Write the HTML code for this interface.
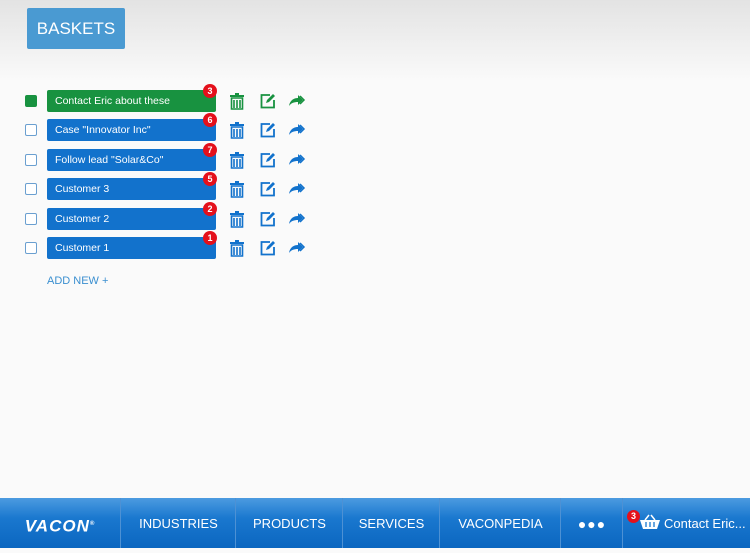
<!DOCTYPE html><html><head><style>
body{margin:0;width:750px;height:548px;overflow:hidden;font-family:"Liberation Sans",sans-serif;background:#fafafa;position:relative}
.top{position:absolute;left:0;top:0;width:750px;height:80px;background:linear-gradient(#e3e3e3,#fafafa)}
.bk{position:absolute;left:27px;top:8px;width:98px;height:41px;background:#4a9ad2;border-radius:2px;color:#fff;font-size:17px;line-height:41px;text-align:center}
.row{position:absolute;left:0;height:22px;width:320px}
.cb{position:absolute;left:25px;top:5px;width:10px;height:10px;border:1px solid #6a9fd0;border-radius:2px;background:#fff}
.bar{position:absolute;left:47px;top:0;width:169px;height:22px;background:#1272cc;border-radius:2px;color:#fff;font-size:10.5px;line-height:22px;padding-left:8px;box-sizing:border-box}
.g .bar{background:#189240}.g .cb{background:#189240;border-color:#189240}
.bd{position:absolute;left:203px;top:-6px;width:14px;height:14px;border-radius:50%;background:#e4101b;color:#fff;font-size:9px;font-weight:bold;text-align:center;line-height:14px}
.ic{position:absolute;top:3px}
.add{position:absolute;left:47px;top:275px;color:#3a8fd0;font-size:11px}
.ft{position:absolute;left:0;top:498px;width:750px;height:50px;background:linear-gradient(#4c9be0,#1a78cf 40%,#0b66c0);color:#fff;font-size:13px}
.ft div{position:absolute;top:0;height:50px;line-height:52px;border-left:1px solid #4d91d4;text-align:center}
</style></head><body>
<div class="top"></div><div class="bk">BASKETS</div>

<div class="row g" style="top:90px"><div class="cb"></div><div class="bar">Contact Eric about these</div><div class="bd">3</div>
<svg class="ic" style="left:229px" width="16" height="17"><rect x="1" y="2" width="14" height="2" fill="#189240"/><rect x="6" y="0" width="4" height="2" fill="#189240"/><path d="M2.5 5h11v11h-11z M5 7v8M8 7v8M11 7v8" stroke="#189240" stroke-width="1.6" fill="none"/></svg>
<svg class="ic" style="left:260px" width="16" height="16"><path d="M10 2H1.5v12.5H14V7" stroke="#189240" stroke-width="1.8" fill="none"/><path d="M6 10l1-3 6-6 2 2-6 6z" fill="#189240"/></svg>
<svg class="ic" style="left:288px;top:5px" width="18" height="12"><path d="M1 11C2 5 6 3 10 3V0l5 5-5 5V7C6 7 3 8 1 11z" fill="#189240"/><path d="M12 1l4 4-4 4" stroke="#189240" stroke-width="1.5" fill="none"/></svg></div>

<div class="row" style="top:119px"><div class="cb"></div><div class="bar">Case "Innovator Inc"</div><div class="bd">6</div>
<svg class="ic" style="left:229px" width="16" height="17"><rect x="1" y="2" width="14" height="2" fill="#1272cc"/><rect x="6" y="0" width="4" height="2" fill="#1272cc"/><path d="M2.5 5h11v11h-11z M5 7v8M8 7v8M11 7v8" stroke="#1272cc" stroke-width="1.6" fill="none"/></svg>
<svg class="ic" style="left:260px" width="16" height="16"><path d="M10 2H1.5v12.5H14V7" stroke="#1272cc" stroke-width="1.8" fill="none"/><path d="M6 10l1-3 6-6 2 2-6 6z" fill="#1272cc"/></svg>
<svg class="ic" style="left:288px;top:5px" width="18" height="12"><path d="M1 11C2 5 6 3 10 3V0l5 5-5 5V7C6 7 3 8 1 11z" fill="#1272cc"/><path d="M12 1l4 4-4 4" stroke="#1272cc" stroke-width="1.5" fill="none"/></svg></div>

<div class="row" style="top:149px"><div class="cb"></div><div class="bar">Follow lead "Solar&amp;Co"</div><div class="bd">7</div>
<svg class="ic" style="left:229px" width="16" height="17"><rect x="1" y="2" width="14" height="2" fill="#1272cc"/><rect x="6" y="0" width="4" height="2" fill="#1272cc"/><path d="M2.5 5h11v11h-11z M5 7v8M8 7v8M11 7v8" stroke="#1272cc" stroke-width="1.6" fill="none"/></svg>
<svg class="ic" style="left:260px" width="16" height="16"><path d="M10 2H1.5v12.5H14V7" stroke="#1272cc" stroke-width="1.8" fill="none"/><path d="M6 10l1-3 6-6 2 2-6 6z" fill="#1272cc"/></svg>
<svg class="ic" style="left:288px;top:5px" width="18" height="12"><path d="M1 11C2 5 6 3 10 3V0l5 5-5 5V7C6 7 3 8 1 11z" fill="#1272cc"/><path d="M12 1l4 4-4 4" stroke="#1272cc" stroke-width="1.5" fill="none"/></svg></div>

<div class="row" style="top:178px"><div class="cb"></div><div class="bar">Customer 3</div><div class="bd">5</div>
<svg class="ic" style="left:229px" width="16" height="17"><rect x="1" y="2" width="14" height="2" fill="#1272cc"/><rect x="6" y="0" width="4" height="2" fill="#1272cc"/><path d="M2.5 5h11v11h-11z M5 7v8M8 7v8M11 7v8" stroke="#1272cc" stroke-width="1.6" fill="none"/></svg>
<svg class="ic" style="left:260px" width="16" height="16"><path d="M10 2H1.5v12.5H14V7" stroke="#1272cc" stroke-width="1.8" fill="none"/><path d="M6 10l1-3 6-6 2 2-6 6z" fill="#1272cc"/></svg>
<svg class="ic" style="left:288px;top:5px" width="18" height="12"><path d="M1 11C2 5 6 3 10 3V0l5 5-5 5V7C6 7 3 8 1 11z" fill="#1272cc"/><path d="M12 1l4 4-4 4" stroke="#1272cc" stroke-width="1.5" fill="none"/></svg></div>

<div class="row" style="top:208px"><div class="cb"></div><div class="bar">Customer 2</div><div class="bd">2</div>
<svg class="ic" style="left:229px" width="16" height="17"><rect x="1" y="2" width="14" height="2" fill="#1272cc"/><rect x="6" y="0" width="4" height="2" fill="#1272cc"/><path d="M2.5 5h11v11h-11z M5 7v8M8 7v8M11 7v8" stroke="#1272cc" stroke-width="1.6" fill="none"/></svg>
<svg class="ic" style="left:260px" width="16" height="16"><path d="M10 2H1.5v12.5H14V7" stroke="#1272cc" stroke-width="1.8" fill="none"/><path d="M6 10l1-3 6-6 2 2-6 6z" fill="#1272cc"/></svg>
<svg class="ic" style="left:288px;top:5px" width="18" height="12"><path d="M1 11C2 5 6 3 10 3V0l5 5-5 5V7C6 7 3 8 1 11z" fill="#1272cc"/><path d="M12 1l4 4-4 4" stroke="#1272cc" stroke-width="1.5" fill="none"/></svg></div>

<div class="row" style="top:237px"><div class="cb"></div><div class="bar">Customer 1</div><div class="bd">1</div>
<svg class="ic" style="left:229px" width="16" height="17"><rect x="1" y="2" width="14" height="2" fill="#1272cc"/><rect x="6" y="0" width="4" height="2" fill="#1272cc"/><path d="M2.5 5h11v11h-11z M5 7v8M8 7v8M11 7v8" stroke="#1272cc" stroke-width="1.6" fill="none"/></svg>
<svg class="ic" style="left:260px" width="16" height="16"><path d="M10 2H1.5v12.5H14V7" stroke="#1272cc" stroke-width="1.8" fill="none"/><path d="M6 10l1-3 6-6 2 2-6 6z" fill="#1272cc"/></svg>
<svg class="ic" style="left:288px;top:5px" width="18" height="12"><path d="M1 11C2 5 6 3 10 3V0l5 5-5 5V7C6 7 3 8 1 11z" fill="#1272cc"/><path d="M12 1l4 4-4 4" stroke="#1272cc" stroke-width="1.5" fill="none"/></svg></div>

<div class="add">ADD NEW +</div>

<div class="ft">
<div style="left:0;width:120px;border:none;font-weight:bold;font-size:17px;letter-spacing:1px;font-style:italic">VACON<sup style="font-size:6px">®</sup></div>
<div style="left:120px;width:115px">INDUSTRIES</div>
<div style="left:235px;width:107px">PRODUCTS</div>
<div style="left:342px;width:97px">SERVICES</div>
<div style="left:439px;width:121px">VACONPEDIA</div>
<div style="left:560px;width:62px;font-size:14px;letter-spacing:1px">●●●</div>
<div style="left:622px;width:128px;text-align:left">
<span style="position:absolute;left:4px;top:12px;width:13px;height:13px;border-radius:50%;background:#e4101b;font-size:9px;font-weight:bold;line-height:13px;text-align:center">3</span>
<svg style="position:absolute;left:16px;top:16px" width="22" height="16"><path d="M1 6h20l-3 9H4z" fill="#fff"/><path d="M6 6L10 1M16 6L12 1" stroke="#fff" stroke-width="1.5"/><path d="M7 8v5M11 8v5M15 8v5" stroke="#1a78cf" stroke-width="1.3"/></svg>
<span style="position:absolute;left:41px;top:0">Contact Eric...</span></div>
</div>
</body></html>
